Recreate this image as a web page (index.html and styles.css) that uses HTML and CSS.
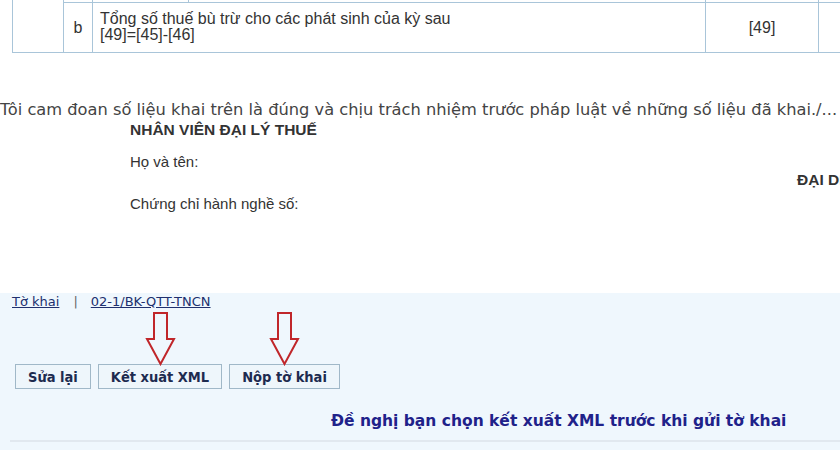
FILE: index.html
```html
<!DOCTYPE html>
<html lang="vi">
<head>
<meta charset="utf-8">
<link rel="stylesheet" href="styles.css">
</head>
<body>
<table class="grid">
  <colgroup>
    <col class="c1"><col class="c2"><col class="c3a"><col class="c3b"><col class="c4"><col class="c5">
  </colgroup>
  <tr class="prev">
    <td rowspan="2"></td><td></td><td></td><td></td><td></td><td class="last"></td>
  </tr>
  <tr class="row">
    <td class="ctr">b</td>
    <td colspan="2" class="desc">Tổng số thuế bù trừ cho các phát sinh của kỳ sau<br>[49]=[45]-[46]</td>
    <td class="code">[49]</td>
    <td class="last"></td>
  </tr>
</table>

<p class="pledge">Tôi cam đoan số liệu khai trên là đúng và chịu trách nhiệm trước pháp luật về những số liệu đã khai./...</p>

<div class="sign">
  <div class="agent">
    <div class="agent-title">NHÂN VIÊN ĐẠI LÝ THUẾ</div>
    <div class="agent-line first">Họ và tên:</div>
    <div class="agent-line second">Chứng chỉ hành nghề số:</div>
  </div>
  <div class="rep">ĐẠI DIỆN THEO PHÁP LUẬT</div>
</div>

<div class="panel">
  <div class="crumbs">
    <a href="#">Tờ khai</a><span class="sep">|</span><a href="#">02-1/BK-QTT-TNCN</a>
  </div>
  <div class="actions">
    <button class="btn">Sửa lại</button>
    <button class="btn">Kết xuất XML</button>
    <button class="btn">Nộp tờ khai</button>
    <svg class="arrow a1" width="32" height="54" viewBox="0 0 32 54"><path d="M9 1 H22 V27 H29 L15.5 52 L2 27 H9 Z" fill="none" stroke="#c0262a" stroke-width="2" stroke-linejoin="miter"/></svg>
    <svg class="arrow a2" width="32" height="54" viewBox="0 0 32 54"><path d="M9 1 H22 V27 H29 L15.5 52 L2 27 H9 Z" fill="none" stroke="#c0262a" stroke-width="2" stroke-linejoin="miter"/></svg>
  </div>
  <div class="notice">Đề nghị bạn chọn kết xuất XML trước khi gửi tờ khai</div>
  <div class="rule"></div>
</div>
</body>
</html>
```

FILE: styles.css
```css
html, body {
  margin: 0;
  padding: 0;
  overflow: hidden;
  background: #fff;
  width: 840px;
  height: 450px;
}

.grid {
  border-collapse: collapse;
  margin-left: 12px;
  table-layout: fixed;
  width: 828px;
  font-family: "Liberation Sans", Arial, sans-serif;
  font-size: 16px;
  color: #333;
}
.grid td {
  border: 1px solid #a9c5d9;
  padding: 0;
}
.grid td.last { border-right: none; }
.c1 { width: 51px; }
.c2 { width: 29px; }
.c3a { width: 96px; }
.c3b { width: 517px; }
.c4 { width: 113px; }
.c5 { width: 22px; }

.grid .prev td { height: 2px; border-top: none; }
.grid .row td { height: 48px; }
.ctr { text-align: center; }
.desc { padding-left: 7px !important; padding-bottom: 1px !important; line-height: 16px; vertical-align: middle; }
.code { text-align: center; }

.pledge {
  margin: 48px 0 0 0;
  font-family: "DejaVu Sans", Verdana, sans-serif;
  font-size: 16.25px;
  line-height: 18px;
  color: #444;
  white-space: nowrap;
}

.sign {
  display: flex;
  font-family: "Liberation Sans", Arial, sans-serif;
  font-size: 15px;
  color: #333;
  height: 174px;
}
.agent {
  box-sizing: border-box;
  flex: 0 0 797px;
  padding-left: 130px;
}
.agent-title {
  font-weight: bold;
  font-size: 15.5px;
  margin-top: 2px;
  line-height: 18px;
}
.agent-line { line-height: 18px; }
.agent-line.first { margin-top: 14px; }
.agent-line.second { margin-top: 24px; }
.rep {
  font-weight: bold;
  font-size: 15.5px;
  white-space: nowrap;
  margin-top: 52px;
  line-height: 18px;
}

.panel {
  background: #eff7fd;
  height: 156px;
  padding-top: 1px;
}
.crumbs {
  font-family: "DejaVu Sans", Verdana, sans-serif;
  font-size: 13px;
  color: #555;
  padding-left: 12px;
  line-height: 16px;
}
.crumbs a { color: #20306e; }
.sep { margin: 0 13px 0 14px; color: #666; }

.actions {
  position: relative;
  display: flex;
  gap: 7px;
  padding-left: 15px;
  margin-top: 54px;
}
.btn {
  font-family: "DejaVu Sans Condensed", "DejaVu Sans", Tahoma, sans-serif;
  font-weight: bold;
  font-size: 14.5px;
  color: #1d2b4f;
  background: #eef6fb;
  border: 1px solid #a0b8c8;
  height: 25px;
  padding: 0 12px;
  margin: 0;
}
.arrow { position: absolute; top: -52px; }
.a1 { left: 145px; }
.a2 { left: 269px; }

.notice {
  font-family: "DejaVu Sans", Verdana, sans-serif;
  font-weight: bold;
  font-size: 15.5px;
  color: #1f228a;
  margin-top: 23px;
  padding-left: 331px;
  line-height: 18px;
  white-space: nowrap;
}
.rule {
  margin: 10px 0 0 10px;
  border-top: 2px solid #e1e8ef;
}
```
